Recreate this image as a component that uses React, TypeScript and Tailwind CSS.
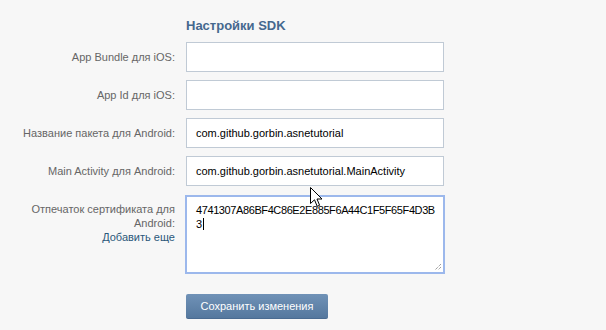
import React from 'react';

const fields = [
  { label: 'App Bundle для iOS:', value: '' },
  { label: 'App Id для iOS:', value: '' },
  { label: 'Название пакета для Android:', value: 'com.github.gorbin.asnetutorial' },
  { label: 'Main Activity для Android:', value: 'com.github.gorbin.asnetutorial.MainActivity' },
];

const Cursor = () => (
  <svg width="13" height="21" viewBox="0 0 13 21" className="absolute left-[310px] top-[187px] pointer-events-none">
    <path d="M0.5 0.5 L0.5 16.5 L4.5 12.8 L7.2 19.3 L9.6 18.3 L7 12 L12 12 Z" fill="#fff" stroke="#000" strokeWidth="1" strokeLinejoin="miter" />
  </svg>
);

const App: React.FC = () => {
  return (
    <div className="relative w-full min-h-[330px] bg-[#f7f7f7] text-[11px] font-['Liberation_Sans',Arial,sans-serif]">
      <div className="grid grid-cols-[175px_258px] gap-x-[11px] pt-[18px]">
        <div />
        <h2 className="text-[13px] leading-[16px] font-bold text-[#45688e] mb-[8px]">Настройки SDK</h2>

        {fields.map((f) => (
          <React.Fragment key={f.label}>
            <label className="flex items-center justify-end text-[#666] mb-[8px]">{f.label}</label>
            <div className="h-[30px] mb-[8px] border border-[#c0cad5] bg-white flex items-center px-[9px] text-black">
              {f.value}
            </div>
          </React.Fragment>
        ))}

        <div className="text-right text-[#666] leading-[14px] pt-[6px] mt-[2px]">
          Отпечаток сертификата для
          <br />
          Android:
          <br />
          <a className="text-[#2b587a] cursor-pointer">Добавить еще</a>
        </div>
        <div className="relative -ml-[1px] mt-[1px] w-[260px] h-[79px] border-2 border-[#9cb8ec] bg-white pl-[9px] pt-[6px] leading-[14px] text-black">
          <div className="tracking-[-0.4px]">4741307A86BF4C86E2E885F6A44C1F5F65F4D3B</div>
          <div className="flex items-center">
            3<span className="inline-block w-px h-[12px] bg-black ml-[1px]" />
          </div>
          <svg width="9" height="9" viewBox="0 0 9 9" className="absolute right-[1px] bottom-[1px]">
            <path d="M8 2 L2 8 M8 5 L5 8" stroke="#777" strokeWidth="1" strokeDasharray="1 1" />
          </svg>
        </div>

        <div />
        <div className="pt-[20px]">
          <button className="w-[142px] h-[25px] rounded-[2px] bg-gradient-to-b from-[#7092b7] to-[#55789e] text-white text-[11px] border-b border-[#4a6b91]">
            Сохранить изменения
          </button>
        </div>
      </div>
      <Cursor />
    </div>
  );
};

export default App;
